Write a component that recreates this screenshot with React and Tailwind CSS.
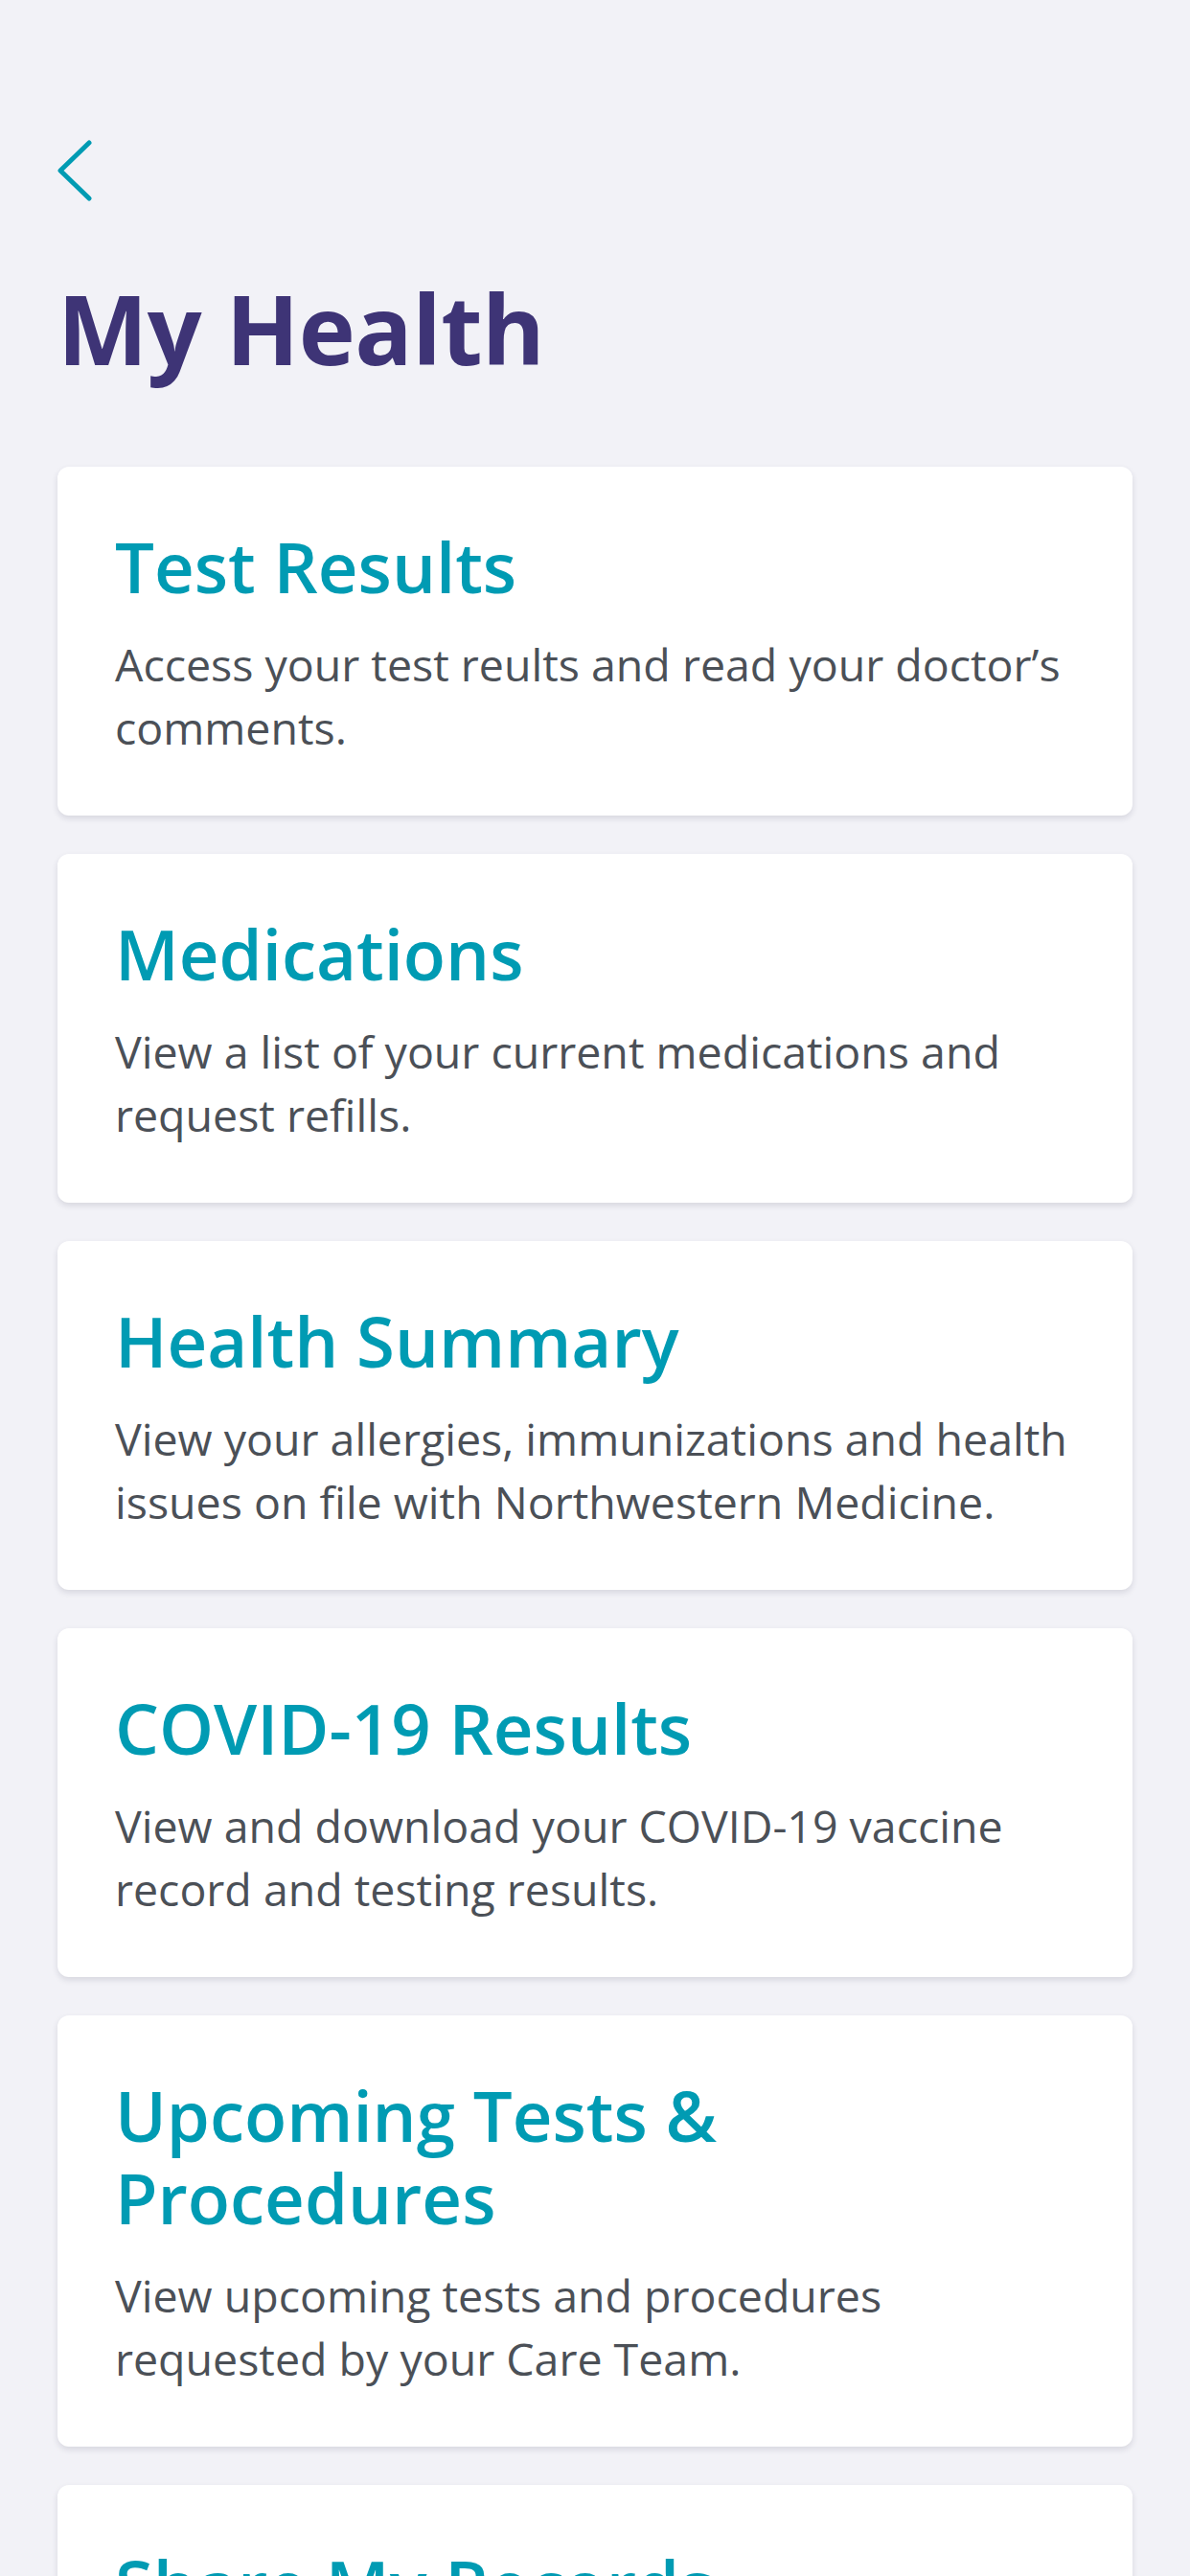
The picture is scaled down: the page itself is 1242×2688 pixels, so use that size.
import React from "react";

const items = [
  {
    title: "Test Results",
    text: "Access your test reults and read your doctor’s comments.",
  },
  {
    title: "Medications",
    text: "View a list of your current medications and request refills.",
  },
  {
    title: "Health Summary",
    text: "View your allergies, immunizations and health issues on file with Northwestern Medicine.",
  },
  {
    title: "COVID-19 Results",
    text: "View and download your COVID-19 vaccine record and testing results.",
  },
  {
    title: "Upcoming Tests & Procedures",
    text: "View upcoming tests and procedures requested by your Care Team.",
  },
  {
    title: "Share My Records",
    text: "Share your health records with other providers and family members.",
  },
];

function BackChevron() {
  return (
    <svg width="40" height="64" viewBox="0 0 40 64" fill="none" aria-hidden="true">
      <path
        d="M34 3 L4 32 L34 61"
        stroke="#009BB3"
        strokeWidth="5"
        strokeLinecap="round"
        strokeLinejoin="round"
      />
    </svg>
  );
}

function Card({ title, text }) {
  return (
    <button className="block w-full rounded-[12px] bg-white px-[60px] pt-[61px] pb-[59px] text-left shadow-[0_3px_6px_rgba(30,30,60,0.13)]">
      <h2 className="text-[72.5px] font-semibold leading-[86px] text-[#009BB3]">{title}</h2>
      <p className="mt-[26px] text-[46.5px] leading-[66px] text-[#4B5057]">{text}</p>
    </button>
  );
}

export default function App() {
  return (
    <div
      className="h-[2688px] w-[1242px] overflow-hidden bg-[#F2F2F7] px-[60px] pt-[146px]"
      style={{ fontFamily: '"Open Sans", "Noto Sans", sans-serif' }}
    >
      {/* Header */}
      <button className="-ml-[1px] block" aria-label="Back">
        <BackChevron />
      </button>
      <h1 className="mt-[72px] text-[100px] font-bold leading-[120px] tracking-[-0.5px] text-[#3E3476]">
        My Health
      </h1>

      {/* Sections */}
      <div className="mt-[85px] flex flex-col gap-[40px]">
        {items.map((it) => (
          <Card key={it.title} title={it.title} text={it.text} />
        ))}
      </div>
    </div>
  );
}
